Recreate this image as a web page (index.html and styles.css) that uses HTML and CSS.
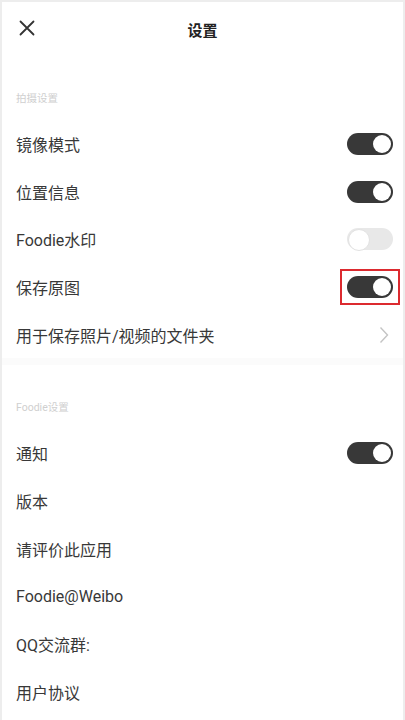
FILE: index.html
```html
<!DOCTYPE html>
<html lang="zh">
<head>
<meta charset="utf-8">
<link rel="stylesheet" href="styles.css">
</head>
<body>
<div class="page">
  <header class="topbar">
    <svg class="close" width="16" height="16" viewBox="0 0 16 16"><path d="M1.5 1.5 L14.5 14.5 M14.5 1.5 L1.5 14.5" stroke="#333" stroke-width="1.8" fill="none" stroke-linecap="round"/></svg>
    <div class="title">设置</div>
  </header>

  <div class="section-label">拍摄设置</div>
  <div class="row"><span class="label">镜像模式</span><span class="toggle on"></span></div>
  <div class="row"><span class="label">位置信息</span><span class="toggle on"></span></div>
  <div class="row"><span class="label">Foodie水印</span><span class="toggle off"></span></div>
  <div class="row"><span class="label">保存原图</span><span class="highlight"><span class="toggle on"></span></span></div>
  <div class="row"><span class="label">用于保存照片/视频的文件夹</span>
    <svg class="chev" width="10" height="18" viewBox="0 0 10 18"><path d="M1.5 1.5 L8.5 9 L1.5 16.5" stroke="#c4c4c4" stroke-width="1.4" fill="none"/></svg>
  </div>

  <div class="gap"></div>

  <div class="section-label">Foodie设置</div>
  <div class="row"><span class="label">通知</span><span class="toggle on"></span></div>
  <div class="row"><span class="label">版本</span></div>
  <div class="row"><span class="label">请评价此应用</span></div>
  <div class="row"><span class="label">Foodie@Weibo</span></div>
  <div class="row"><span class="label">QQ交流群:</span></div>
  <div class="row"><span class="label">用户协议</span></div>
</div>
</body>
</html>
```

FILE: styles.css
```css
* { box-sizing: border-box; }
html, body { margin: 0; padding: 0; background: #fff; }
body {
  font-family: Roboto, "Noto Sans CJK SC", "Noto Sans", sans-serif;
  color: #333;
  width: 405px;
  height: 720px;
  overflow: hidden;
}
.page {
  height: 720px;
  border-left: 2px solid #ededed;
  border-right: 2px solid #ededed;
  border-top: 2px solid #ededed;
  background: #fff;
}
.topbar {
  height: 54px;
  position: relative;
  display: flex;
  align-items: center;
  justify-content: center;
}
.close {
  position: absolute;
  left: 17px;
  top: 18px;
}
.title {
  font-size: 15px;
  font-weight: bold;
  color: #222;
}
.section-label {
  height: 64px;
  padding: 35px 0 0 14px;
  font-size: 10.5px;
  color: #cfcfcf;
  line-height: 16px;
}
.row {
  height: 47.7px;
  display: flex;
  align-items: center;
  justify-content: space-between;
  padding: 0 10px 0 14px;
}
.label {
  font-size: 16px;
  color: #383838;
}
.toggle {
  width: 46px;
  height: 22px;
  border-radius: 11px;
  position: relative;
  display: block;
}
.toggle::after {
  content: "";
  position: absolute;
  top: 2px;
  width: 18px;
  height: 18px;
  border-radius: 50%;
  background: #fff;
}
.toggle.on { background: #383838; }
.toggle.on::after { right: 2px; }
.toggle.off { background: #e8e8e8; }
.toggle.off::after { left: 1px; top: 1px; width: 20px; height: 20px; border: 1px solid #e2e2e2; }
.highlight {
  border: 2px solid #dc2a2f;
  padding: 5px;
  margin-right: -7px;
  display: block;
}
.chev { margin-right: 4px; }
.gap {
  height: 7px;
  background: #fbfbfb;
}
```
